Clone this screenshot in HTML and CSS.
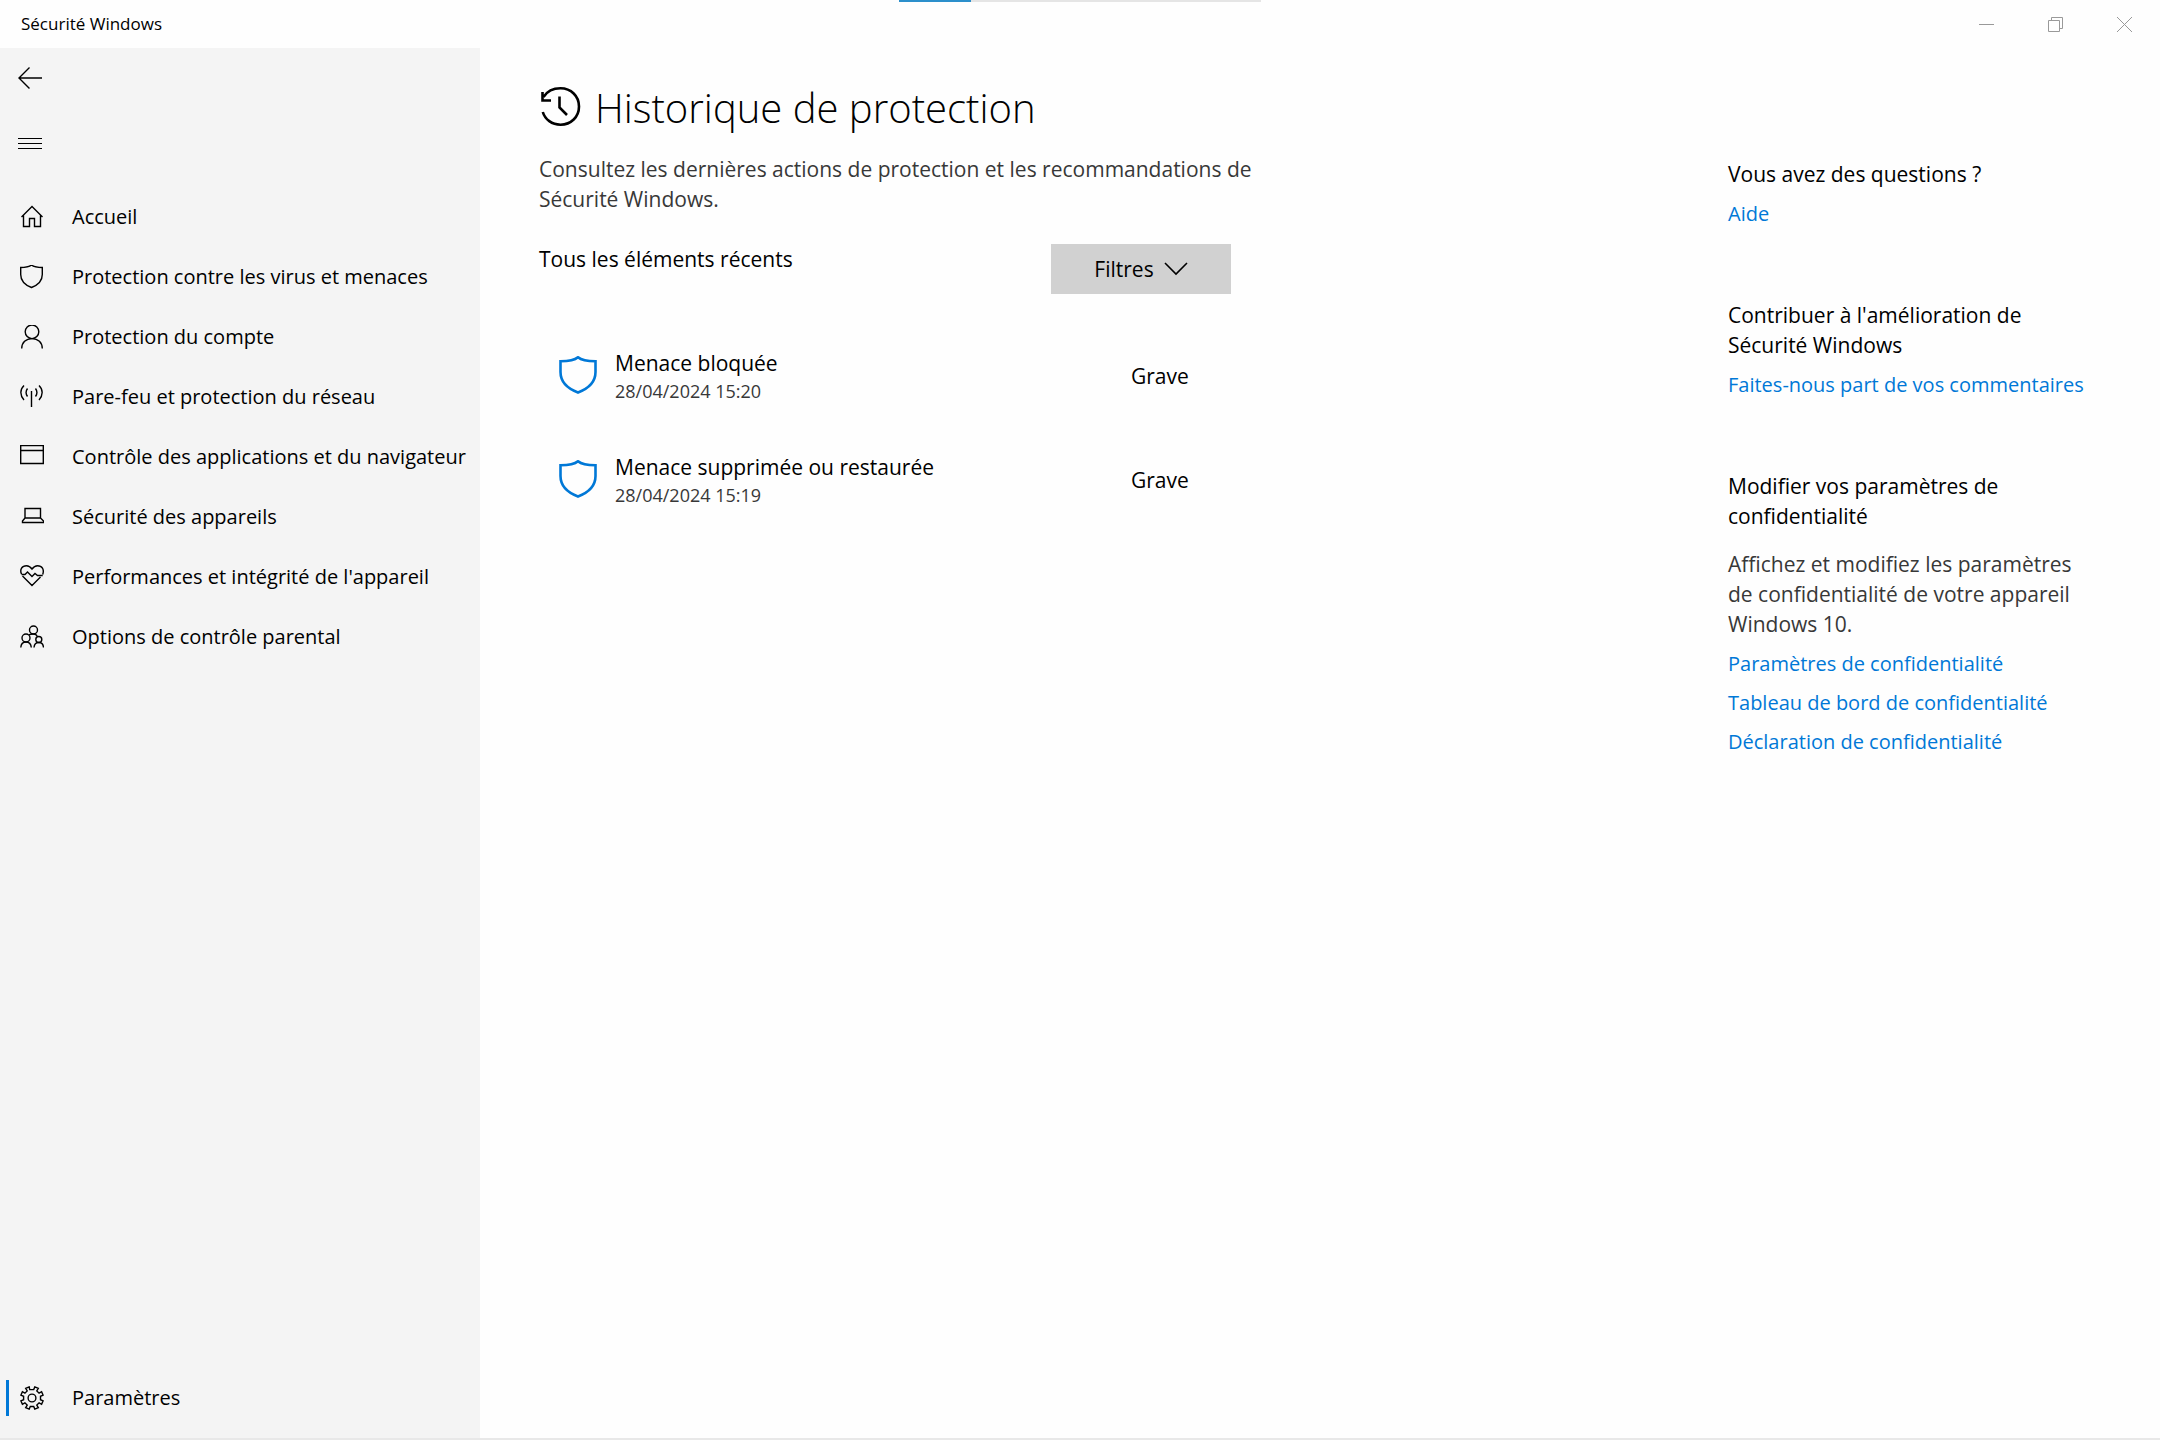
FILE: index.html
```html
<!DOCTYPE html>
<html lang="fr">
<head>
    <meta charset="UTF-8">
    <meta name="viewport" content="width=device-width, initial-scale=1.0">
    <title>Sécurité Windows</title>
    <link rel="stylesheet" href="styles.css">
</head>
<body>

    <header class="titlebar">
        <div class="drag-bar"><span class="drag-bar-fill"></span></div>
        <span class="app-title">Sécurité Windows</span>
        <div class="window-buttons">
            <button type="button" aria-label="Réduire">
                <svg width="17" height="17" viewBox="0 0 17 17"><path d="M1 8.5H16"/></svg>
            </button>
            <button type="button" aria-label="Restaurer">
                <svg width="17" height="17" viewBox="0 0 17 17"><path d="M1.5 4.5H12.5V15.5H1.5ZM4.5 4.5V1.5H15.5V12.5H12.5"/></svg>
            </button>
            <button type="button" aria-label="Fermer">
                <svg width="17" height="17" viewBox="0 0 17 17"><path d="M1 1L16 16M16 1L1 16"/></svg>
            </button>
        </div>
    </header>

    <div class="window">
        <aside class="sidebar">
            <button type="button" class="pane-button" aria-label="Retour">
                <svg class="icon" viewBox="0 0 24 24"><path d="M1 12H24M11.5 1.5L1 12L11.5 22.5"/></svg>
            </button>
            <button type="button" class="pane-button" aria-label="Menu">
                <svg class="icon thin" viewBox="0 0 24 24"><path d="M0 6.5H24M0 11.5H24M0 16.5H24"/></svg>
            </button>

            <nav class="nav">
                <a class="nav-item" href="#">
                    <svg class="icon" viewBox="0 0 24 24"><path d="M1.5 12L12 1.5L22.5 12M3.5 10.5V21.5H9.5V13.5H14.5V21.5H20.5V10.5"/></svg>
                    <span>Accueil</span>
                </a>
                <a class="nav-item" href="#">
                    <svg class="icon" viewBox="0 0 24 24"><path d="M11.500 0C9 2 5.500 2.500 0.700 2.500V9.500C0.700 15.500 5 20 11.500 22.500C18 20 22.300 15.500 22.300 9.500V2.500C17.500 2.500 14 2 11.500 0Z"/></svg>
                    <span>Protection contre les virus et menaces</span>
                </a>
                <a class="nav-item" href="#">
                    <svg class="icon" viewBox="0 0 24 24"><circle cx="12" cy="6.800" r="6.800"/><path d="M1.700 23.500C1.700 17.500 6 13.600 12 13.600S22.300 17.500 22.300 23.500"/></svg>
                    <span>Protection du compte</span>
                </a>
                <a class="nav-item" href="#">
                    <svg class="icon" viewBox="0 0 24 24"><path d="M11.500 6V22M7.500 3.500C5.700 6 5.700 9 7.500 11.500M15.500 3.500C17.300 6 17.300 9 15.500 11.500M4 0.500C-0.200 4.500 -0.200 10.500 4 15M19 0.500C23.200 4.500 23.200 10.500 19 15"/></svg>
                    <span>Pare-feu et protection du réseau</span>
                </a>
                <a class="nav-item" href="#">
                    <svg class="icon" viewBox="0 0 24 24"><path d="M0.700 0.500H23.300V18.500H0.700ZM0.700 5.500H23.300"/></svg>
                    <span>Contrôle des applications et du navigateur</span>
                </a>
                <a class="nav-item" href="#">
                    <svg class="icon" viewBox="0 0 24 24"><path d="M5 3.500H20.500V13H5ZM5 13L2.500 16V17.500H23.500V16L20.500 13"/></svg>
                    <span>Sécurité des appareils</span>
                </a>
                <a class="nav-item" href="#">
                    <svg class="icon" viewBox="0 0 24 24"><path d="M1.500 9C-0.500 4.500 2 0.700 6.500 0.700C9 0.700 10.500 2 12 4C13.500 2 15 0.700 17.500 0.700C22 0.700 24.500 4.500 22.700 9.500M1.500 9.500H5L7.500 7L12 11.500L15 8.500L17.500 10.500H22.700M2.500 11L12 20.500L20.500 12"/></svg>
                    <span>Performances et intégrité de l'appareil</span>
                </a>
                <a class="nav-item" href="#">
                    <svg class="icon" viewBox="0 0 24 24"><circle cx="13.500" cy="5" r="4"/><circle cx="6" cy="13" r="4"/><circle cx="18.800" cy="14.500" r="3"/><path d="M0.800 22.500C1 19 3 17 6 17S11 19 11.300 22.500M14 22.500C14.200 19.500 16 17.500 18.800 17.500S23.300 19.500 23.500 22.500M9 9.800C10 9.200 11.500 9 13.500 9C15 9 16.500 9.500 17.300 11.500"/></svg>
                    <span>Options de contrôle parental</span>
                </a>
            </nav>

            <a class="nav-item nav-settings" href="#">
                <svg class="icon" viewBox="0 0 24 24"><circle cx="12" cy="12" r="3.900"/><path d="M9.700 3.600L9.200 0.900L5.700 2.400L7.200 4.900L4.900 7.200L2.400 5.700L0.900 9.200L3.600 10.300V13.700L0.900 14.800L2.400 18.300L4.900 16.800L7.200 19.100L5.700 21.600L9.200 23.100L10.300 20.500H13.700L14.800 23.100L18.300 21.600L16.800 19.100L19.100 16.800L21.600 18.300L23.100 14.800L20.500 13.700V10.300L23.100 9.200L21.600 5.700L19.100 7.200L16.800 4.900L18.300 2.400L14.800 0.900L13.700 3.600Z"/></svg>
                <span>Paramètres</span>
            </a>
        </aside>

        <main class="content">
            <h1>
                <svg class="history-icon" width="42" height="42" viewBox="0 0 42 42"><path d="M4.500 10C8 4.500 14 1.300 21.500 1.300C32 1.300 40 9 40 19.500S32 37.700 21.500 37.700C13 37.700 6 32.500 3.800 25M3.500 5V13.500H12M20.500 9.500V20.500L28 28"/></svg>
                Historique de protection
            </h1>
            <p class="intro">Consultez les dernières actions de protection et les recommandations de Sécurité Windows.</p>

            <div class="toolbar">
                <h2>Tous les éléments récents</h2>
                <button type="button" class="filter-button">
                    Filtres
                    <svg width="24" height="14" viewBox="0 0 24 14"><path d="M1 1L12 12L23 1"/></svg>
                </button>
            </div>

            <ul class="history">
                <li class="history-item">
                    <svg class="shield" width="38" height="40" viewBox="0 0 38 40"><path d="M19 1.300C15 4.800 9.500 5.300 1.500 5.300V16C1.500 26 8.500 32.500 19 36.500C29.500 32.500 36.500 26 36.500 16V5.300C28.500 5.300 23 4.800 19 1.300Z"/></svg>
                    <div class="history-text">
                        <h3>Menace bloquée</h3>
                        <time datetime="2024-04-28T15:20">28/04/2024 15:20</time>
                    </div>
                    <span class="severity">Grave</span>
                </li>
                <li class="history-item">
                    <svg class="shield" width="38" height="40" viewBox="0 0 38 40"><path d="M19 1.300C15 4.800 9.500 5.300 1.500 5.300V16C1.500 26 8.500 32.500 19 36.500C29.500 32.500 36.500 26 36.500 16V5.300C28.500 5.300 23 4.800 19 1.300Z"/></svg>
                    <div class="history-text">
                        <h3>Menace supprimée ou restaurée</h3>
                        <time datetime="2024-04-28T15:19">28/04/2024 15:19</time>
                    </div>
                    <span class="severity">Grave</span>
                </li>
            </ul>
        </main>

        <aside class="help">
            <section>
                <h2>Vous avez des questions ?</h2>
                <a href="#">Aide</a>
            </section>
            <section>
                <h2>Contribuer à l'amélioration de Sécurité Windows</h2>
                <a href="#">Faites-nous part de vos commentaires</a>
            </section>
            <section>
                <h2>Modifier vos paramètres de confidentialité</h2>
                <p>Affichez et modifiez les paramètres de confidentialité de votre appareil Windows 10.</p>
                <a href="#">Paramètres de confidentialité</a>
                <a href="#">Tableau de bord de confidentialité</a>
                <a href="#">Déclaration de confidentialité</a>
            </section>
        </aside>
    </div>

</body>
</html>
```
FILE: styles.css
```css
* {
    box-sizing: border-box;
}

body {
    display: flex;
    flex-direction: column;
    min-height: 100vh;
    margin: 0;
    border-bottom: 2px solid #e8e8e8;
    background-color: #fefefe;
    color: #000;
    font-family: 'Segoe UI', 'Open Sans', 'Noto Sans', sans-serif;
    font-size: 21px;
    line-height: 30px;
}

h1,
h2,
h3,
p,
ul {
    margin: 0;
    padding: 0;
    font-size: inherit;
    font-weight: normal;
}

a {
    color: #0078d7;
    text-decoration: none;
}

button {
    padding: 0;
    border: none;
    background: none;
    color: inherit;
    font: inherit;
}

svg {
    flex-shrink: 0;
    fill: none;
    stroke: currentColor;
}

/* Title bar */
.titlebar {
    position: relative;
    display: flex;
    align-items: center;
    justify-content: space-between;
    height: 48px;
    padding: 0 1px 0 21px;
}

.drag-bar {
    position: absolute;
    top: 0;
    left: 0;
    right: 0;
    width: 362px;
    height: 2px;
    margin: 0 auto;
    background-color: #e5e5e5;
}

.drag-bar-fill {
    display: block;
    width: 20%;
    height: 100%;
    background-color: #2c8fcb;
}

.app-title {
    font-size: 17px;
}

.window-buttons {
    display: flex;
    color: #999;
}

.window-buttons button {
    display: flex;
    align-items: center;
    justify-content: center;
    width: 69px;
    height: 48px;
}

/* Layout */
.window {
    display: flex;
    flex: 1;
}

.sidebar {
    display: flex;
    flex-direction: column;
    flex-shrink: 0;
    width: 480px;
    padding-bottom: 10px;
    background-color: #f4f4f4;
}

.icon {
    width: 24px;
    height: 24px;
    stroke-width: 1.4;
}

.thin {
    stroke-width: 1;
}

.pane-button {
    display: flex;
    align-items: center;
    width: 60px;
    height: 60px;
    margin-bottom: 6px;
    padding-left: 18px;
}

.nav {
    margin-top: 7px;
}

.nav-item {
    display: flex;
    align-items: center;
    gap: 28px;
    height: 60px;
    padding-left: 20px;
    color: #000;
    font-size: 20px;
}

.nav-settings {
    position: relative;
    margin-top: auto;
}

.nav-settings::before {
    content: '';
    position: absolute;
    top: 12px;
    bottom: 12px;
    left: 6px;
    width: 3px;
    background-color: #0078d7;
}

/* Protection history */
.content {
    flex: 1;
    padding: 36px 32px 0 59px;
}

h1 {
    display: flex;
    align-items: center;
    gap: 14px;
    font-size: 40px;
    font-weight: 300;
    line-height: 48px;
}

.history-icon {
    stroke-width: 2.6;
}

.intro {
    max-width: 730px;
    margin-top: 22px;
    color: #383838;
}

.toolbar {
    display: flex;
    align-items: flex-start;
    justify-content: space-between;
    max-width: 692px;
    margin-top: 30px;
}

.filter-button {
    display: flex;
    align-items: center;
    justify-content: center;
    gap: 10px;
    width: 180px;
    height: 50px;
    background-color: #d1d1d1;
}

.filter-button svg {
    stroke-width: 1.6;
}

.history {
    max-width: 692px;
    margin-top: 30px;
    list-style: none;
}

.history-item {
    display: grid;
    grid-template-columns: 38px 1fr 100px;
    align-items: center;
    gap: 18px;
    height: 104px;
    padding-left: 20px;
}

.shield {
    color: #0078d7;
    stroke-width: 2.6;
}

.history-text time {
    display: block;
    color: #383838;
    font-size: 18px;
    line-height: 26px;
}

/* Help column */
.help {
    display: flex;
    flex-direction: column;
    flex-shrink: 0;
    gap: 72px;
    width: 432px;
    padding: 111px 60px 0 0;
}

.help p {
    margin-top: 18px;
    color: #383838;
}

.help a {
    display: block;
    margin-top: 11px;
    font-size: 20px;
    line-height: 28px;
}
```
